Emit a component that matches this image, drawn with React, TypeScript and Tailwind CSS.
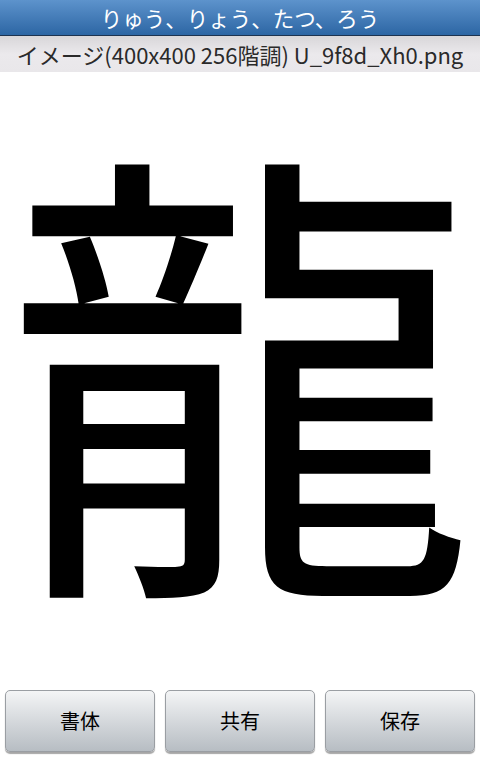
const jp = { fontFamily: '"Noto Sans CJK JP", "Noto Sans", sans-serif' };

function ToolButton({ label }: { label: string }) {
  return (
    <button
      className="flex-1 h-[62px] rounded-[5px] border border-[#9a9ea3] bg-gradient-to-b from-[#f4f5f6] to-[#b7bdc3] shadow-[0_2px_1px_rgba(0,0,0,0.35)] text-[20px] text-black"
      style={jp}
    >
      {label}
    </button>
  );
}

export default function App() {
  return (
    <div className="w-[480px] h-[760px] bg-white flex flex-col overflow-hidden" style={jp}>
      <header className="h-[36px] flex items-center justify-center bg-gradient-to-b from-[#5d93cc] to-[#2c66a4] border-b border-[#1c3350]">
        <span className="text-white text-[21.5px] leading-none">りゅう、りょう、たつ、ろう</span>
      </header>
      <div className="h-[36px] flex items-center justify-center bg-gradient-to-b from-[#d8d6d9] via-[#ebe9ec] to-[#e9e7ea]">
        <span className="text-[#2a2a2a] text-[22px] leading-none">
          イメージ(400x400 256階調) U_9f8d_Xh0.png
        </span>
      </div>
      <main className="flex-1 flex items-center justify-center pb-[52px]">
        <span className="text-black text-[472px] leading-none font-normal" style={jp}>
          龍
        </span>
      </main>
      <footer className="flex gap-[10px] px-[5px] pb-[8px]">
        <ToolButton label="書体" />
        <ToolButton label="共有" />
        <ToolButton label="保存" />
      </footer>
    </div>
  );
}
